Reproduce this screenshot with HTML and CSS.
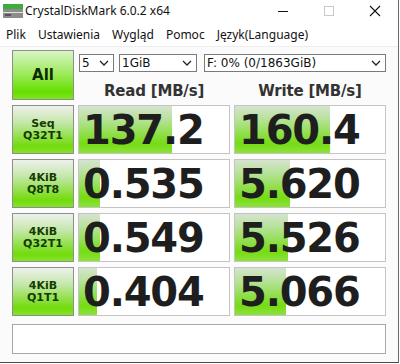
FILE: index.html
```html
<!DOCTYPE html>
<html>
<head>
<meta charset="utf-8">
<title>CrystalDiskMark 6.0.2 x64</title>
<link rel="stylesheet" href="styles.css">
</head>
<body>
<div class="window">

<div class="titlebar">
  <svg class="appicon" width="22" height="16" viewBox="0 0 22 16">
    <rect x="1" y="1" width="20" height="5" fill="#3dac3d"/>
    <rect x="1" y="6" width="20" height="9" fill="#8c8c8c"/>
    <rect x="1" y="9" width="20" height="1" fill="#e0e0e0"/>
    <rect x="3" y="11" width="6" height="2" fill="#555"/>
  </svg>
  <span class="title">CrystalDiskMark 6.0.2 x64</span>
  <div class="caption">
    <svg width="46" height="20" viewBox="0 0 46 20"><path d="M18 10.5h10" stroke="#111" stroke-width="1"/></svg>
    <svg width="46" height="20" viewBox="0 0 46 20"><rect x="18.5" y="5.5" width="9" height="9" fill="none" stroke="#c8c8c8"/></svg>
    <svg width="46" height="20" viewBox="0 0 46 20"><path d="M18 5l10 10M28 5L18 15" stroke="#111" stroke-width="1.1"/></svg>
  </div>
</div>

<div class="menubar">
  <span>Plik</span>
  <span>Ustawienia</span>
  <span>Wygląd</span>
  <span>Pomoc</span>
  <span>Język(Language)</span>
</div>

<div class="main">
  <div class="top">
    <div class="btn all">All</div>
    <div class="controls">
      <div class="combos">
        <div class="combo c-count"><span>5</span><svg width="10" height="6" viewBox="0 0 10 6"><path d="M1 1l4 4 4-4" fill="none" stroke="#222" stroke-width="1.3"/></svg></div>
        <div class="combo c-size"><span>1GiB</span><svg width="10" height="6" viewBox="0 0 10 6"><path d="M1 1l4 4 4-4" fill="none" stroke="#222" stroke-width="1.3"/></svg></div>
        <div class="combo c-drive"><span>F: 0% (0/1863GiB)</span><svg width="10" height="6" viewBox="0 0 10 6"><path d="M1 1l4 4 4-4" fill="none" stroke="#222" stroke-width="1.3"/></svg></div>
      </div>
      <div class="heads">
        <div>Read [MB/s]</div>
        <div>Write [MB/s]</div>
      </div>
    </div>
  </div>

  <div class="results">
    <div class="btn label">Seq<br>Q32T1</div>
    <div class="cell"><div class="bar" style="width:93px"></div><span>137.2</span></div>
    <div class="cell"><div class="bar" style="width:95px"></div><span>160.4</span></div>

    <div class="btn label">4KiB<br>Q8T8</div>
    <div class="cell"><div class="bar" style="width:21px"></div><span>0.535</span></div>
    <div class="cell"><div class="bar" style="width:55px"></div><span>5.620</span></div>

    <div class="btn label">4KiB<br>Q32T1</div>
    <div class="cell"><div class="bar" style="width:21px"></div><span>0.549</span></div>
    <div class="cell"><div class="bar" style="width:53px"></div><span>5.526</span></div>

    <div class="btn label">4KiB<br>Q1T1</div>
    <div class="cell"><div class="bar" style="width:18px"></div><span>0.404</span></div>
    <div class="cell"><div class="bar" style="width:51px"></div><span>5.066</span></div>
  </div>

  <div class="comment"></div>
</div>

</div>
</body>
</html>
```

FILE: styles.css
```css
body {
   margin: 0;
   background-color: white;
   font-family: "Noto Sans", "Open Sans", sans-serif;
}

.window {
   width: 398px;
   height: 362px;
   border-right: 1px solid #6a6a6a;
   border-bottom: 1px solid #4a4a4a;
   background: #fbfbfb;
   overflow: hidden;
}

/* title bar */
.titlebar {
   height: 22px;
   display: flex;
   align-items: center;
   background: #fff;
}

.appicon {
   margin-left: 2px;
   margin-right: 0;
}

.title {
   font-size: 12px;
   color: #111;
   margin-left: 1px;
   margin-top: -1px;
}

.caption {
   margin-left: auto;
   display: flex;
   margin-right: 0;
}

/* menu */
.menubar {
   height: 24px;
   display: flex;
   align-items: center;
   gap: 12px;
   padding-left: 6px;
   font-size: 12px;
   color: #111;
   background: #fff;
   border-bottom: 1px solid #eeeeee;
}

/* main panel */
.main {
   padding: 3px 0 0 12px;
}

.top {
   display: grid;
   grid-template-columns: 62px 308px;
   column-gap: 4px;
   height: 50px;
}

.btn {
   box-sizing: border-box;
   border: 1px solid #8e8e8e;
   display: flex;
   align-items: center;
   justify-content: center;
   text-align: center;
   font-family: "DejaVu Sans", Verdana, sans-serif;
   font-weight: bold;
   color: #143c00;
}

.all {
   font-size: 15px;
   color: #0d2a00;
   background: linear-gradient(#d9f5c4 0%, #a8ec6e 40%, #66df00 85%, #7ee51e 100%);
}

.label {
   font-size: 11px;
   line-height: 12px;
   background: linear-gradient(#eef1ec 0%, #c4e7aa 35%, #72dc0c 85%, #86e22a 100%);
}

.controls {
   display: flex;
   flex-direction: column;
}

.combos {
   display: flex;
   margin-top: 4px;
   height: 18px;
}

.combo {
   box-sizing: border-box;
   height: 18px;
   border: 1px solid #7a7a7a;
   background: #fff;
   display: flex;
   align-items: center;
   justify-content: space-between;
   padding: 0 4px 0 2px;
   font-family: "DejaVu Sans", Tahoma, sans-serif;
   font-size: 12px;
   color: #111;
}

.c-count {
   width: 35px;
   margin-left: 1px;
}

.c-size {
   width: 78px;
   margin-left: 5px;
}

.c-drive {
   width: 182px;
   margin-left: 7px;
}

.heads {
   display: grid;
   grid-template-columns: 152px 152px;
   column-gap: 4px;
   margin-top: 10px;
}

.heads div {
   text-align: center;
   font-family: "DejaVu Sans", Verdana, sans-serif;
   font-weight: bold;
   font-size: 15px;
   color: #333;
   letter-spacing: -0.2px;
}

/* results */
.results {
   display: grid;
   grid-template-columns: 62px 152px 152px;
   grid-auto-rows: 49px;
   column-gap: 4px;
   row-gap: 5px;
   margin-top: 5px;
}

.cell {
   position: relative;
   box-sizing: border-box;
   border: 1px solid #c4c4c4;
   background: #fff;
   display: flex;
   align-items: center;
   overflow: hidden;
}

.bar {
   position: absolute;
   left: 0;
   top: 0;
   bottom: 0;
   background: linear-gradient(#d6e3d0 0%, #b4e296 30%, #76dc14 80%, #8ce23a 100%);
}

.cell span {
   position: relative;
   padding-left: 4px;
   font-family: "DejaVu Sans", Verdana, sans-serif;
   font-weight: bold;
   font-size: 40px;
   letter-spacing: -1.2px;
   color: #1e1e1e;
   line-height: 1;
}

.comment {
   box-sizing: border-box;
   width: 374px;
   height: 30px;
   margin-top: 8px;
   border: 1px solid #a8a8a8;
   background: #fff;
}
```
